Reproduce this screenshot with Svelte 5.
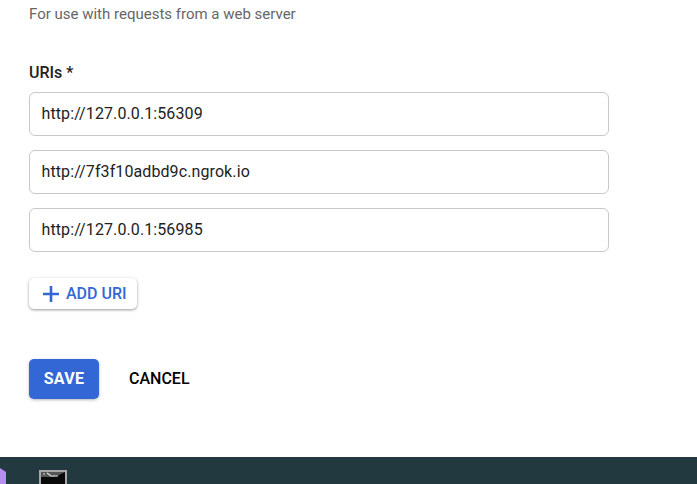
<script>
    let uris = ["http://127.0.0.1:56309", "http://7f3f10adbd9c.ngrok.io", "http://127.0.0.1:56985"];
</script>

<style>
    :global(body) {
        background: #fff;
        font-family: Roboto, sans-serif;
        overflow: hidden;
    }

    .page {
        height: 484px;
        display: flex;
        flex-direction: column;
        overflow: hidden;
    }

    .content {
        flex: 1;
        padding: 5px 0 0 29px;
    }

    .hint {
        font-size: 15px;
        line-height: 18px;
        color: #666;
    }

    .label {
        margin-top: 40px;
        font-size: 16px;
        line-height: 20px;
        font-weight: 500;
        color: #222;
    }

    .uri-list {
        margin-top: 9px;
        display: flex;
        flex-direction: column;
        gap: 14px;
    }

    .uri {
        box-sizing: border-box;
        width: 580px;
        height: 44px;
        padding: 0 11px 1px 11.5px;
        border: 1px solid #c8c8c8;
        border-radius: 6px;
        display: flex;
        align-items: center;
        font-size: 16px;
        letter-spacing: 0.1px;
        color: #222;
    }

    .add {
        margin-top: 26px;
        width: 108px;
        height: 31px;
        border: none;
        border-radius: 5px;
        background: #fff;
        box-shadow: 0 1px 3px rgba(0, 0, 0, 0.4);
        color: #3367d6;
        font-family: inherit;
        font-size: 16px;
        font-weight: 500;
        display: flex;
        align-items: center;
        gap: 7px;
        padding: 0 0 0 14px;
    }

    .actions {
        margin-top: 50px;
        display: flex;
        align-items: center;
        gap: 30px;
    }

    .save {
        width: 70px;
        height: 40px;
        border: none;
        border-radius: 5px;
        background: #3367d6;
        box-shadow: 0 1px 3px rgba(0, 0, 0, 0.3);
        color: #fff;
        font-family: inherit;
        font-size: 16px;
        font-weight: 700;
        letter-spacing: 0.3px;
        padding: 0 0 1px;
    }

    .cancel {
        border: none;
        background: none;
        padding: 0 0 2px;
        color: #000;
        font-family: inherit;
        font-size: 16px;
        font-weight: 500;
    }

    .taskbar {
        height: 27px;
        background: #223940;
        display: flex;
        gap: 33px;
        padding-top: 10px;
        box-sizing: border-box;
        overflow: hidden;
    }

    .purple {
        width: 6px;
        height: 17px;
        margin-top: 1px;
        flex: none;
        background: #b98cf2;
        clip-path: polygon(0 0, 100% 4px, 100% 100%, 0 100%);
    }

    .term {
        width: 28px;
        height: 20px;
        margin-top: 3px;
        flex: none;
        display: block;
    }
</style>

<div class="page">
    <div class="content">
        <div class="hint">For use with requests from a web server</div>
        <div class="label">URIs *</div>
        <div class="uri-list">
            {#each uris as uri}
                <div class="uri">{uri}</div>
            {/each}
        </div>
        <button class="add">
            <svg width="16" height="16" viewBox="0 0 16 16"><path d="M8 0v16M0 8h16" stroke="#3367d6" stroke-width="2.6" fill="none"/></svg>
            ADD URI
        </button>
        <div class="actions">
            <button class="save">SAVE</button>
            <button class="cancel">CANCEL</button>
        </div>
    </div>
    <div class="taskbar">
        <div class="purple"></div>
        <svg class="term" viewBox="0 0 28 20">
            <rect x="1" y="1" width="26" height="19" fill="#0a0a0a" stroke="#a8a8a8" stroke-width="2"/>
            <path d="M2 2h24l-10 5H2z" fill="#555"/>
            <path d="M4 4h2M8 3l4 3h7" stroke="#e0e0e0" stroke-width="1.2" fill="none"/>
        </svg>
    </div>
</div>
